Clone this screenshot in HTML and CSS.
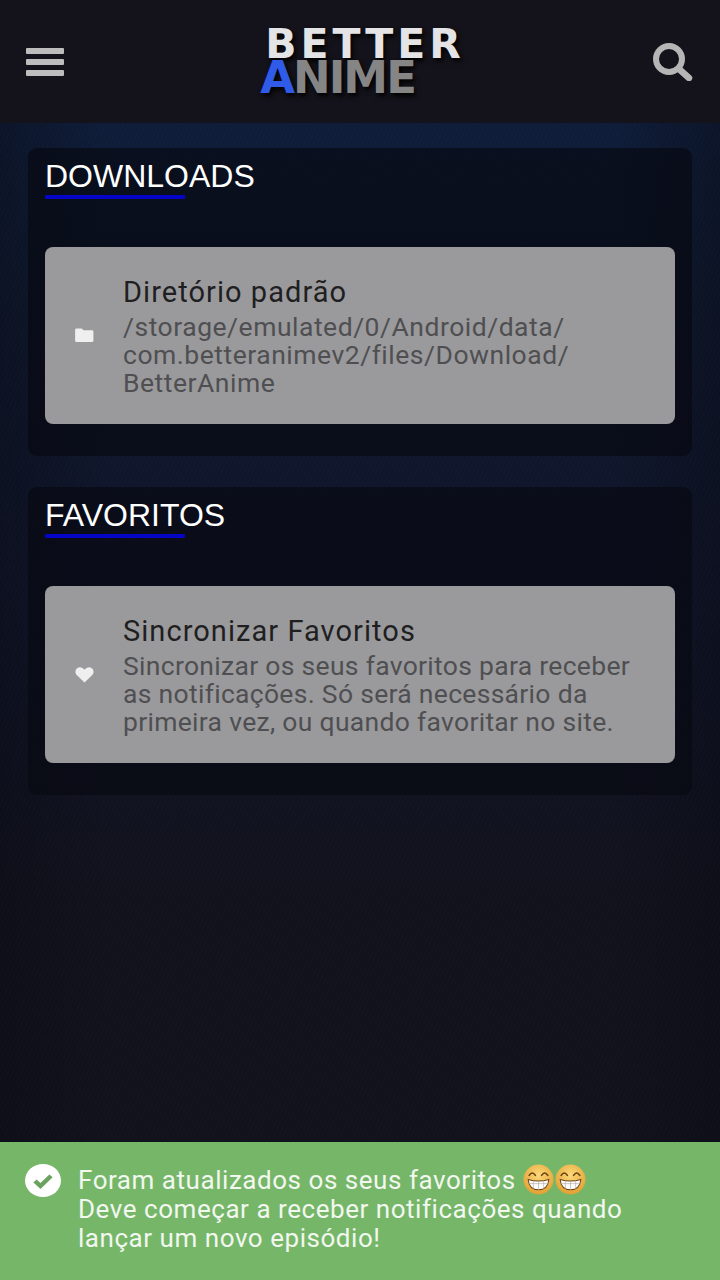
FILE: index.html
```html
<!DOCTYPE html>
<html lang="pt">
<head>
    <meta charset="UTF-8">
    <meta name="viewport" content="width=device-width, initial-scale=1.0">
    <title>Better Anime</title>
    <link rel="stylesheet" href="styles.css">
</head>
<body>

    <header class="topo">
        <svg class="icone-menu" viewBox="0 0 38 28" aria-hidden="true">
            <rect x="0" y="0" width="38" height="6" rx="1"/>
            <rect x="0" y="11" width="38" height="6" rx="1"/>
            <rect x="0" y="22" width="38" height="6" rx="1"/>
        </svg>

        <div class="logo">
            <div class="logo-better">BETTER</div>
            <div class="logo-anime"><span class="logo-a">A</span>NIME</div>
        </div>

        <svg class="icone-busca" viewBox="0 0 42 38" aria-hidden="true">
            <circle cx="17" cy="16" r="13" fill="none" stroke-width="6"/>
            <path d="M27 26 L37 35" fill="none" stroke-width="6.5" stroke-linecap="round"/>
        </svg>
    </header>

    <main class="conteudo">
        <section class="painel">
            <h2 class="painel-titulo">DOWNLOADS</h2>
            <div class="cartao">
                <div class="cartao-icone">
                    <svg viewBox="0 0 20 16" width="19" height="15" aria-hidden="true">
                        <path d="M0 2 Q0 0.5 1.5 0.5 H7 L9 2.5 H18 Q19.5 2.5 19.5 4 V13.5 Q19.5 15 18 15 H1.5 Q0 15 0 13.5 Z"/>
                    </svg>
                </div>
                <div class="cartao-texto">
                    <h3>Diretório padrão</h3>
                    <p class="caminho">/storage/emulated/0/Android/data/<br>com.betteranimev2/files/Download/<br>BetterAnime</p>
                </div>
            </div>
        </section>

        <section class="painel">
            <h2 class="painel-titulo">FAVORITOS</h2>
            <div class="cartao">
                <div class="cartao-icone">
                    <svg viewBox="0 0 20 17" width="19" height="16" aria-hidden="true">
                        <path d="M10 16.5 L2 8.8 C-0.5 6.3 0 2.5 2.6 1 C5 -0.3 8 0.5 10 3 C12 0.5 15 -0.3 17.4 1 C20 2.5 20.5 6.3 18 8.8 Z"/>
                    </svg>
                </div>
                <div class="cartao-texto">
                    <h3>Sincronizar Favoritos</h3>
                    <p>Sincronizar os seus favoritos para receber<br>as notificações. Só será necessário da<br>primeira vez, ou quando favoritar no site.</p>
                </div>
            </div>
        </section>
    </main>

    <div class="aviso">
        <svg class="aviso-icone" viewBox="0 0 36 36" preserveAspectRatio="none" aria-hidden="true">
            <circle cx="18" cy="18" r="18" fill="#fff"/>
            <path d="M10 18.5 L15.5 24 L26 13" fill="none" stroke="#6aa35f" stroke-width="4.5"/>
        </svg>
        <p class="aviso-texto">
            Foram atualizados os seus favoritos
            <svg class="emoji" viewBox="0 0 30 30" aria-hidden="true"><use href="#sorriso"/></svg><svg class="emoji" viewBox="0 0 30 30" aria-hidden="true"><use href="#sorriso"/></svg><br>
            Deve começar a receber notificações quando<br>
            lançar um novo episódio!
        </p>
    </div>

    <svg class="defs" aria-hidden="true">
        <defs>
            <radialGradient id="pele" cx="50%" cy="35%" r="65%">
                <stop offset="0%" stop-color="#fbd97a"/>
                <stop offset="100%" stop-color="#e3a032"/>
            </radialGradient>
            <g id="sorriso">
                <circle cx="15" cy="15" r="14.5" fill="url(#pele)"/>
                <path d="M6 11 Q9 6.5 12 11 M18 11 Q21 6.5 24 11" fill="none" stroke="#6b4313" stroke-width="1.6" stroke-linecap="round"/>
                <path d="M5 15 Q15 18 25 15 Q24 25 15 25 Q6 25 5 15 Z" fill="#fff" stroke="#6b4313" stroke-width="1"/>
                <path d="M5.5 19 H24.5 M10 16 V24 M15 17 V25 M20 16 V24" stroke="#b9b2a6" stroke-width="0.7"/>
            </g>
        </defs>
    </svg>

</body>
</html>
```
FILE: styles.css
```css
html, body {
    height: 100%;
}

body {
    margin: 0;
    display: flex;
    flex-direction: column;
    height: 1280px;
    overflow: hidden;
    font-family: Roboto, "Liberation Sans", sans-serif;
    background-color: #11121c;
    background-image:
        repeating-linear-gradient(115deg, rgba(255, 255, 255, 0.012) 0, rgba(255, 255, 255, 0.012) 1px, transparent 1px, transparent 4px),
        linear-gradient(90deg, rgba(8, 10, 20, 0.45), transparent 15%, transparent 85%, rgba(8, 10, 20, 0.45)),
        linear-gradient(180deg, #0f1d3a 123px, #0f1a30 300px, #10152a 560px, #11121c 900px);
}

.topo {
    flex: 0 0 123px;
    display: flex;
    align-items: center;
    justify-content: space-between;
    padding: 0 26px 0 26px;
    background-color: #14131b;
}

.icone-menu {
    width: 38px;
    height: 28px;
    fill: #bdbdbd;
}

.icone-busca {
    width: 42px;
    height: 38px;
    stroke: #b5b5b5;
}

.logo {
    display: flex;
    flex-direction: column;
    margin-left: 14px;
    font-family: "DejaVu Sans", sans-serif;
    font-weight: bold;
    text-shadow: 2px 3px 5px #000;
}

.logo-better {
    color: #e4e4e6;
    font-size: 41px;
    line-height: 33px;
    letter-spacing: 4px;
}

.logo-anime {
    color: #858585;
    font-size: 45px;
    line-height: 34px;
    letter-spacing: -2px;
    margin-left: -5px;
}

.logo-a {
    color: #2f5be8;
}

.conteudo {
    flex: 1;
    display: flex;
    flex-direction: column;
    gap: 31px;
    padding: 25px 28px 0;
}

.painel {
    height: 308px;
    box-sizing: border-box;
    padding: 12px 17px 0;
    border-radius: 9px;
    background-color: rgba(8, 9, 18, 0.68);
}

.painel-titulo {
    width: max-content;
    height: 38px;
    margin: 0 0 49px;
    color: #fff;
    font-family: "Liberation Sans", sans-serif;
    font-size: 32px;
    font-weight: 400;
    line-height: 33px;
    position: relative;
}

.painel-titulo::after {
    content: "";
    position: absolute;
    left: 0;
    bottom: -1px;
    width: 140px;
    height: 4px;
    background-color: #0505c8;
    border-radius: 1px;
}

.cartao {
    display: flex;
    align-items: center;
    height: 177px;
    border-radius: 8px;
    background-color: #9a9a9c;
}

.cartao-icone {
    flex: 0 0 78px;
    display: flex;
    justify-content: center;
    fill: #efefef;
}

.cartao-texto {
    padding-top: 1px;
}

.cartao-texto h3 {
    margin: 0 0 5px;
    color: #1f1f22;
    font-size: 29px;
    font-weight: 400;
    line-height: 32px;
    letter-spacing: 1.05px;
}

.cartao-texto p {
    margin: 0;
    color: #4f4f52;
    font-size: 26.5px;
    line-height: 28px;
    letter-spacing: 0.3px;
}

.cartao-texto .caminho {
    letter-spacing: 0.52px;
}

.aviso {
    flex: 0 0 138px;
    display: flex;
    align-items: flex-start;
    gap: 17px;
    box-sizing: border-box;
    padding: 22px 25px 0;
    background-color: #75b668;
}

.aviso-icone {
    flex: none;
    width: 36px;
    height: 33px;
}

.aviso-texto {
    margin: 0;
    color: #f2f7ef;
    font-size: 26px;
    line-height: 29px;
    letter-spacing: 0.54px;
}

.emoji {
    width: 31px;
    height: 31px;
    vertical-align: -6px;
    margin-right: 1px;
}

.defs {
    position: absolute;
    width: 0;
    height: 0;
}
```
